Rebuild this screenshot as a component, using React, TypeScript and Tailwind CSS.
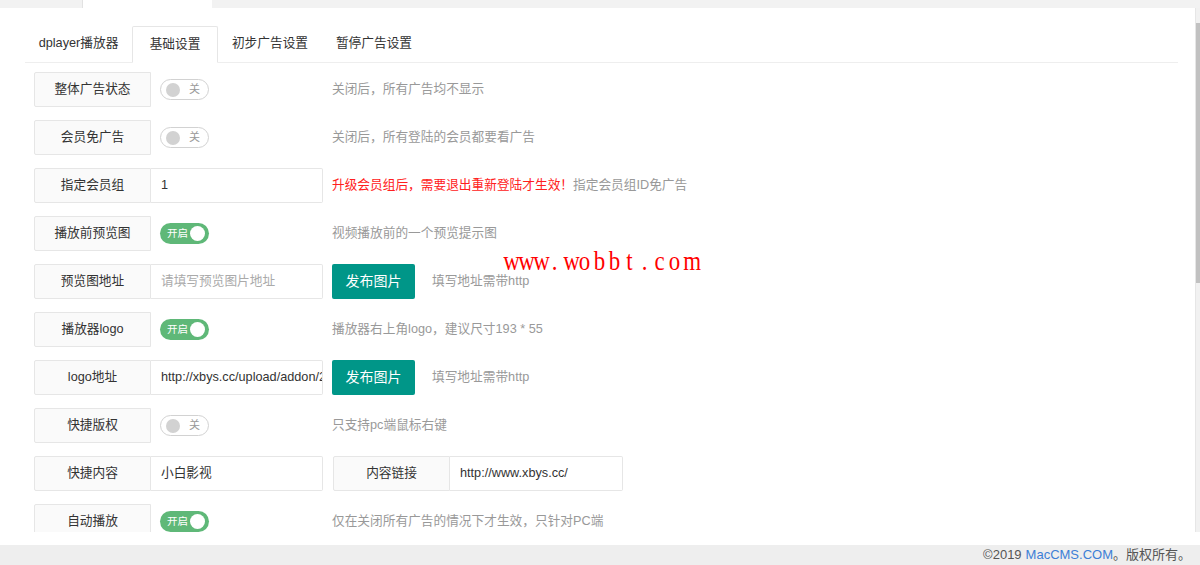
import React from "react";

const font = { fontFamily: '"Liberation Sans", "Noto Sans CJK SC", sans-serif' };

function Label({ children }: { children: React.ReactNode }) {
  return (
    <div className="w-[117px] h-[35px] shrink-0 flex items-center justify-center border border-[#e6e6e6] bg-[#fafafa] rounded-l-[2px] text-[#333]">
      {children}
    </div>
  );
}

function Input({ value, placeholder, w = "w-[172px]" }: { value?: string; placeholder?: string; w?: string }) {
  return (
    <div className={`${w} h-[35px] shrink-0 flex items-center border border-l-0 border-[#e6e6e6] rounded-r-[2px] px-[10px] overflow-hidden whitespace-nowrap bg-white`}>
      {value ? <span className="text-[#333]">{value}</span> : <span className="text-[#aaa]">{placeholder}</span>}
    </div>
  );
}

function Switch({ on }: { on: boolean }) {
  return (
    <div className="w-[172px] h-[35px] shrink-0 pl-[9px] flex items-center">
      {on ? (
        <div className="w-[49px] h-[21px] rounded-full bg-[#5fb878] flex items-center justify-between pl-[7px] pr-[4px]">
          <span className="text-[10.5px] text-white leading-none">开启</span>
          <span className="w-[15px] h-[15px] rounded-full bg-white" />
        </div>
      ) : (
        <div className="w-[49px] h-[21px] rounded-full border border-[#d2d2d2] bg-white flex items-center pl-[5px] pr-[8px] justify-between">
          <span className="w-[14px] h-[14px] rounded-full bg-[#d2d2d2]" />
          <span className="text-[11px] text-[#999] leading-none">关</span>
        </div>
      )}
    </div>
  );
}

function Aux({ children, className = "ml-[9px]" }: { children: React.ReactNode; className?: string }) {
  return <div className={`${className} text-[#999] whitespace-nowrap`}>{children}</div>;
}

function UploadBtn() {
  return (
    <div className="ml-[9px] w-[83px] h-[35px] shrink-0 flex items-center justify-center bg-[#009688] text-white text-[14px] rounded-[2px]">
      发布图片
    </div>
  );
}

export default function App() {
  const tabs = [
    { name: "dplayer播放器", w: "w-[107px]" },
    { name: "基础设置", w: "w-[86px]", active: true },
    { name: "初步广告设置", w: "w-[104px]" },
    { name: "暂停广告设置", w: "w-[104px]" },
  ];

  return (
    <div className="relative w-[1200px] h-[565px] bg-white flex flex-col text-[12.7px] overflow-hidden" style={font}>
      {/* parent tab strip */}
      <div className="h-[8px] shrink-0 bg-[#f2f2f2] flex">
        <div className="w-[82px]" />
        <div className="w-[130px] bg-white border-l border-[#e2e2e2]" />
      </div>

      <div className="h-[524px] shrink-0 flex">
        <div className="flex-1 overflow-hidden pl-[25px] pr-[17px] pt-[18px]">
          <ul className="h-[37px] flex border-b border-[#eeeeee]">
            {tabs.map((t) =>
              t.active ? (
                <li
                  key={t.name}
                  className={`${t.w} h-[37px] -mb-px flex items-center justify-center border border-[#e6e6e6] border-b-white rounded-t-[2px] bg-white text-[#333]`}
                >
                  {t.name}
                </li>
              ) : (
                <li key={t.name} className={`${t.w} h-[36px] flex items-center justify-center text-[#333]`}>
                  {t.name}
                </li>
              )
            )}
          </ul>

          <div className="pt-[9px] pl-[9px] flex flex-col gap-[13px]">
            <div className="flex items-center h-[35px]">
              <Label>整体广告状态</Label>
              <Switch on={false} />
              <Aux>关闭后，所有广告均不显示</Aux>
            </div>
            <div className="flex items-center h-[35px]">
              <Label>会员免广告</Label>
              <Switch on={false} />
              <Aux>关闭后，所有登陆的会员都要看广告</Aux>
            </div>
            <div className="flex items-center h-[35px]">
              <Label>指定会员组</Label>
              <Input value="1" />
              <div className="ml-[9px] whitespace-nowrap">
                <span className="text-[#ff2020]">升级会员组后，需要退出重新登陆才生效！</span>
                <span className="text-[#999]">指定会员组ID免广告</span>
              </div>
            </div>
            <div className="flex items-center h-[35px]">
              <Label>播放前预览图</Label>
              <Switch on={true} />
              <Aux>视频播放前的一个预览提示图</Aux>
            </div>
            <div className="flex items-center h-[35px]">
              <Label>预览图地址</Label>
              <Input placeholder="请填写预览图片地址" />
              <UploadBtn />
              <Aux className="ml-[17px]">填写地址需带http</Aux>
            </div>
            <div className="flex items-center h-[35px]">
              <Label>播放器logo</Label>
              <Switch on={true} />
              <Aux>播放器右上角logo，建议尺寸193 * 55</Aux>
            </div>
            <div className="flex items-center h-[35px]">
              <Label>logo地址</Label>
              <Input value="http://xbys.cc/upload/addon/2" />
              <UploadBtn />
              <Aux className="ml-[17px]">填写地址需带http</Aux>
            </div>
            <div className="flex items-center h-[35px]">
              <Label>快捷版权</Label>
              <Switch on={false} />
              <Aux>只支持pc端鼠标右键</Aux>
            </div>
            <div className="flex items-center h-[35px]">
              <Label>快捷内容</Label>
              <Input value="小白影视" />
              <div className="ml-[10px] flex">
                <Label>内容链接</Label>
                <Input value="http://www.xbys.cc/" w="w-[173px]" />
              </div>
            </div>
            <div className="flex items-center h-[35px]">
              <Label>自动播放</Label>
              <Switch on={true} />
              <Aux>仅在关闭所有广告的情况下才生效，只针对PC端</Aux>
            </div>
          </div>
        </div>

        {/* scrollbar */}
        <div className="w-[5px] shrink-0 bg-[#f1f1f1] border-l border-[#e6e6e6]">
          <div className="mt-[15px] h-[260px] bg-[#c1c1c1]" />
        </div>
      </div>

      <div className="h-[13px] shrink-0 bg-white" />

      <footer className="h-[20px] shrink-0 bg-[#eeeeee] flex items-center justify-end pr-[9px] text-[13px] text-[#555]">
        ©2019 <span className="text-[#3d7fd6] ml-[4px]">MacCMS.COM</span>。版权所有。
      </footer>

      {/* watermark: monospaced serif cells */}
      <div
        className="absolute left-[502px] top-[248px] flex text-[27px] leading-none text-[#ff0000] whitespace-nowrap"
        style={{ fontFamily: '"Liberation Serif", serif' }}
      >
        {"www.wobbt.com".split("").map((c, i) => (
          <span key={i} className="w-[15px] text-center scale-x-[0.85]">
            {c}
          </span>
        ))}
      </div>
    </div>
  );
}
